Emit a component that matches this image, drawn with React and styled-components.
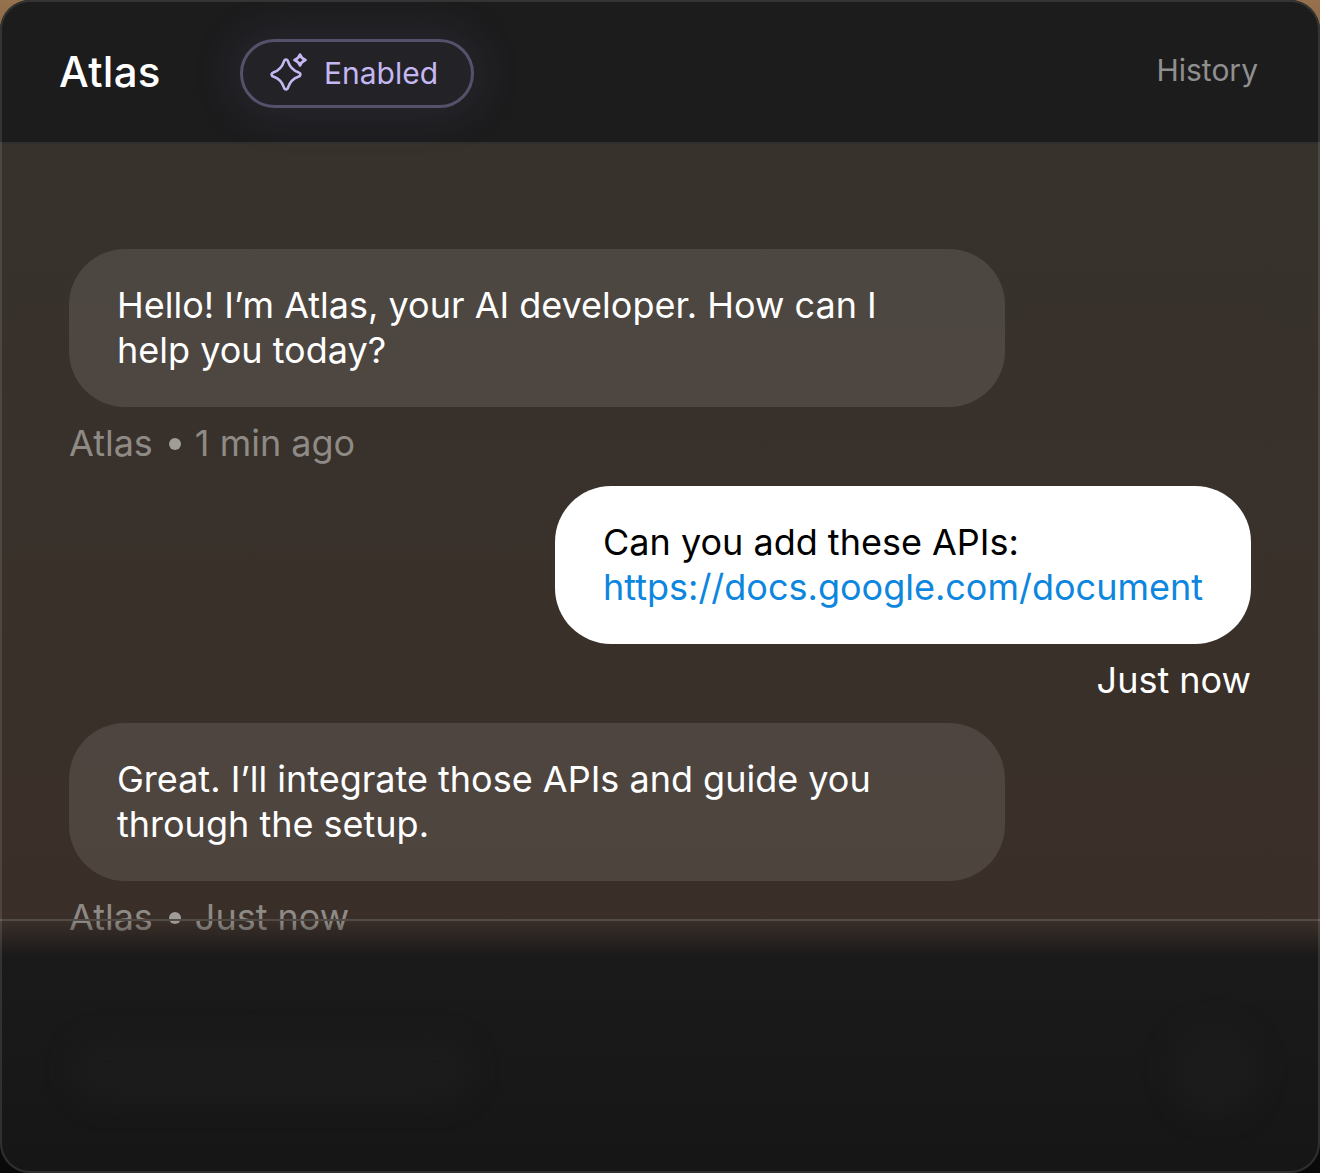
import React from "react";
import styled, { createGlobalStyle } from "styled-components";

const GlobalStyle = createGlobalStyle`
  html, body {
    margin: 0;
    padding: 0;
    background: linear-gradient(180deg, #96714d 0, #3a2d22 300px, #0a0a0a 1000px);
  }
  * {
    box-sizing: border-box;
  }
`;

const Frame = styled.div`
  position: relative;
  width: 1320px;
  height: 1173px;
  display: flex;
  flex-direction: column;
  border-radius: 30px;
  overflow: hidden;
  font-family: Inter, "Liberation Sans", sans-serif;
  background: #3a2e28;
  &::after {
    content: "";
    position: absolute;
    z-index: 2;
    inset: 0;
    border-radius: 30px;
    border: 2px solid rgba(255, 255, 255, 0.11);
    pointer-events: none;
  }
`;

const Header = styled.header`
  position: relative;
  z-index: 1;
  height: 144px;
  flex: none;
  display: flex;
  align-items: flex-start;
  padding: 39px 62px 0 59px;
  background: #1c1c1d;
  border-bottom: 2px solid #302f2d;
`;

const Title = styled.h1`
  margin: 0;
  width: 181px;
  height: 62px;
  font-size: 42px;
  line-height: 66px;
  font-weight: 500;
  letter-spacing: 0.3px;
  color: #ffffff;
`;

const StatusPill = styled.div`
  width: 234px;
  height: 69px;
  display: flex;
  align-items: center;
  gap: 15px;
  padding-left: 24px;
  border: 3px solid #55516a;
  border-radius: 35px;
  background: #232227;
  box-shadow: 0 0 40px 10px rgba(105, 100, 150, 0.14);
  color: #c5b8f2;
  font-size: 30px;
`;

const PillLabel = styled.span`
  margin-top: -2px;
`;

const HistoryLink = styled.a`
  margin-left: auto;
  color: #8f8f8f;
  font-size: 30px;
  line-height: 62px;
`;

const Chat = styled.main`
  height: 775px;
  flex: none;
  display: flex;
  flex-direction: column;
  padding: 105px 69px 0;
  background: linear-gradient(180deg, #37322c 0%, #3a302a 75%, #3a2e28 100%);
`;

const Message = styled.div`
  display: flex;
  flex-direction: column;
  align-items: ${(p) => (p.$mine ? "flex-end" : "flex-start")};
  margin-bottom: 20px;
`;

const Bubble = styled.div`
  width: ${(p) => (p.$mine ? "696px" : "936px")};
  height: 158px;
  padding: 34px 48px 0;
  border-radius: 56px;
  background: ${(p) => (p.$mine ? "#ffffff" : "rgba(255, 255, 255, 0.105)")};
  color: ${(p) => (p.$mine ? "#000000" : "#ffffff")};
  font-size: 36px;
  line-height: 45px;
`;

const DocLink = styled.a`
  color: #0c86de;
`;

const Meta = styled.div`
  margin-top: 13px;
  font-size: 36px;
  line-height: 46px;
  color: ${(p) => (p.$mine ? "#ffffff" : "#8e8a85")};
`;

const Dot = styled.span`
  display: inline-block;
  width: 12px;
  height: 12px;
  margin: 0 14px 0 16px;
  border-radius: 50%;
  background: #a09c97;
  vertical-align: 6px;
`;

const Footer = styled.footer`
  position: relative;
  flex: 1;
  display: flex;
  align-items: center;
  justify-content: space-between;
  padding: 48px 60px 0 72px;
  border-top: 2px solid #514c47;
  background: linear-gradient(
    180deg,
    rgba(24, 24, 24, 0) 0,
    rgba(26, 26, 26, 1) 34px,
    #181818 60%,
    #161616 100%
  );
`;

const GhostInput = styled.div`
  width: 400px;
  height: 66px;
  border-radius: 33px;
  background: #1b1b1b;
  filter: blur(12px);
`;

const GhostButton = styled.div`
  width: 90px;
  height: 90px;
  border-radius: 50%;
  background: #1b1b1b;
  filter: blur(12px);
`;

const SparkleIcon = () => (
  <svg width="42" height="42" viewBox="0 0 42 42" fill="none" stroke="#c5b8f2" strokeWidth="2.6" strokeLinejoin="round">
    <path d="M19 6.500c1 0 1.700.8 2.200 2.300 1.800 5.400 4.300 8.300 10 10.400 1.300.5 2.300 1.100 2.300 2.300s-1 1.800-2.300 2.300c-5.700 2.100-8.200 5-10 10.400-.5 1.500-1.200 2.300-2.200 2.300s-1.700-.8-2.200-2.300c-1.800-5.400-4.300-8.300-10-10.400-1.300-.5-2.300-1.100-2.300-2.300s1-1.800 2.300-2.300c5.700-2.100 8.200-5 10-10.400.5-1.500 1.200-2.300 2.200-2.300z" />
    <path d="M33 1.500c.9 2.900 2.100 4.100 5.500 5.500-3.400 1.400-4.600 2.600-5.500 5.500-.9-2.900-2.100-4.100-5.500-5.500 3.400-1.400 4.600-2.600 5.500-5.500z" />
  </svg>
);

const App = () => {
  return (
    <>
      <GlobalStyle />
      <Frame>
        <Header>
          <Title>Atlas</Title>
          <StatusPill>
            <SparkleIcon />
            <PillLabel>Enabled</PillLabel>
          </StatusPill>
          <HistoryLink>History</HistoryLink>
        </Header>
        <Chat>
          <Message>
            <Bubble>
              Hello! I’m Atlas, your AI developer. How can I help you today?
            </Bubble>
            <Meta>
              Atlas<Dot />1 min ago
            </Meta>
          </Message>
          <Message $mine>
            <Bubble $mine>
              Can you add these APIs:
              <br />
              <DocLink>https://docs.google.com/document</DocLink>
            </Bubble>
            <Meta $mine>Just now</Meta>
          </Message>
          <Message>
            <Bubble>
              Great. I’ll integrate those APIs and guide you through the setup.
            </Bubble>
            <Meta>
              Atlas<Dot />Just now
            </Meta>
          </Message>
        </Chat>
        <Footer>
          <GhostInput />
          <GhostButton />
        </Footer>
      </Frame>
    </>
  );
};

export default App;
